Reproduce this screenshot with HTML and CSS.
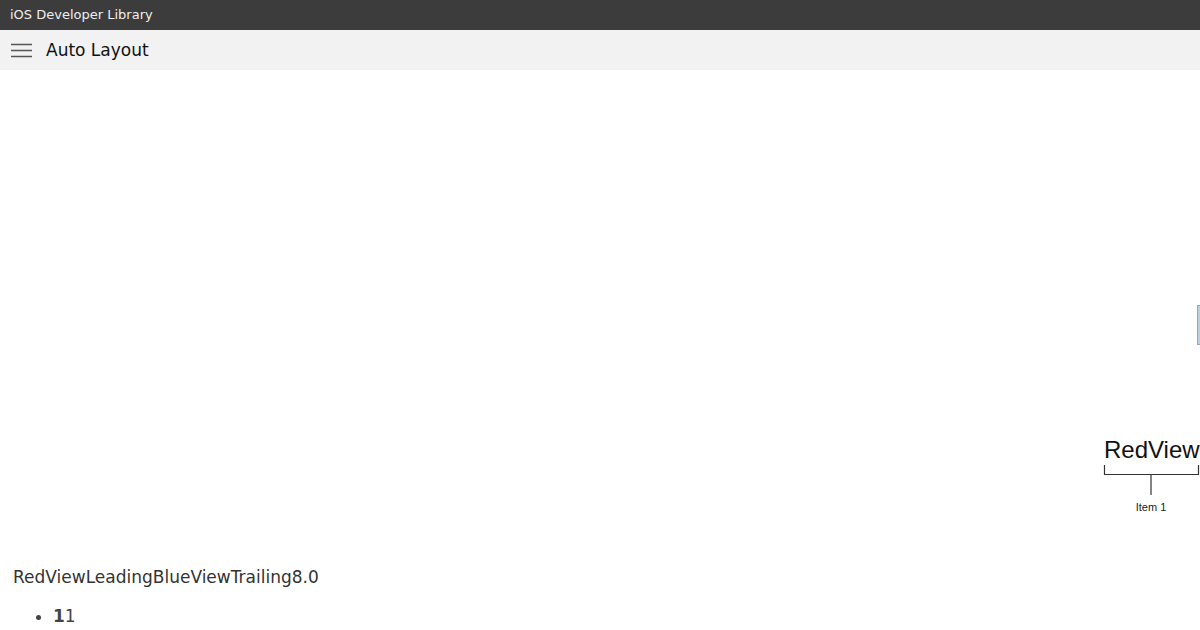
FILE: index.html
```html
<!DOCTYPE html>
<html lang="en">
<head>
    <meta charset="UTF-8">
    <title>Auto Layout</title>
    <link rel="stylesheet" href="styles.css">
</head>
<body>
    <div class="topbar">iOS Developer Library</div>

    <div class="navbar">
        <svg class="menu-icon" width="21" height="15" viewBox="0 0 21 15">
            <path d="M0 1.5H21M0 7.5H21M0 13.5H21" stroke="#555" stroke-width="1.6" fill="none"/>
        </svg>
        <span class="nav-title">Auto Layout</span>
    </div>

    <div class="figure">
        <!-- constraint diagram, only its left edge is in view -->
        <svg class="diagram" width="1200" height="480" viewBox="0 0 1200 480">
            <rect x="1197.5" y="235.5" width="12" height="39" fill="#bcd0e2" stroke="#8ea8be" stroke-width="1"/>
            <text x="1104" y="388" class="diagram-label">RedView</text>
            <path d="M1104.5 395V404.5H1198.5V395" stroke="#333" stroke-width="1.2" fill="none"/>
            <path d="M1151 404.5V425" stroke="#333" stroke-width="1.2" fill="none"/>
            <text x="1151" y="441" class="diagram-item">Item 1</text>
        </svg>
    </div>

    <p class="constraint">RedViewLeadingBlueViewTrailing8.0</p>
    <ul class="values">
        <li><b>1</b>1</li>
    </ul>
</body>
</html>
```

FILE: styles.css
```css
body {
    margin: 0;
    font-family: 'DejaVu Sans', sans-serif;
    background: #fff;
    overflow: hidden;
}
.topbar {
    height: 30px;
    line-height: 29px;
    background-color: #3c3c3c;
    color: #eeeeee;
    font-size: 13px;
    padding-left: 10px;
}
.navbar {
    height: 40px;
    background-color: #f2f2f2;
    display: flex;
    align-items: center;
    padding-left: 11px;
    gap: 14px;
}
.menu-icon {
    display: block;
    margin-top: 1px;
}
.nav-title {
    font-size: 17px;
    color: #111;
}
.figure {
    height: 480px;
}
.diagram {
    display: block;
}
.diagram-label {
    font-family: 'Liberation Sans', Arial, sans-serif;
    font-size: 24px;
    fill: #111;
}
.diagram-item {
    font-family: 'Liberation Sans', Arial, sans-serif;
    font-size: 11px;
    fill: #222;
    text-anchor: middle;
}
.constraint {
    margin: 17px 0 0 13px;
    font-size: 17px;
    color: #333;
}
.values {
    margin: 19px 0 0 13px;
    padding-left: 40px;
    font-size: 17px;
    color: #444;
}
```
